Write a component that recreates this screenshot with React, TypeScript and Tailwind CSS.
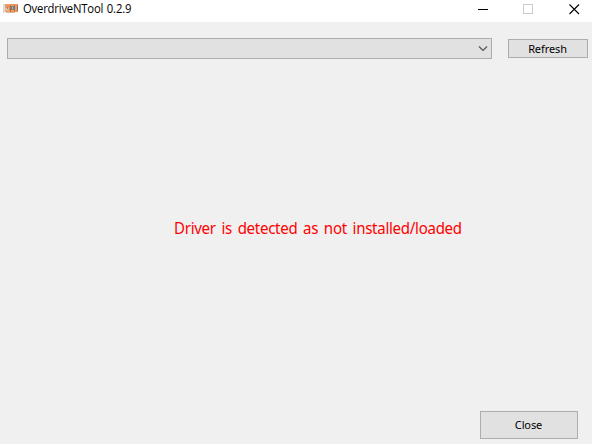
import React from 'react';

function AppIcon() {
  return (
    <svg width="16" height="12" viewBox="0 0 16 12">
      <path fill="#dcd8d3" d="M0 1h2v9H0z" />
      <path fill="#f0a470" d="M2 1h13v8H2z" />
      <path fill="#e8905a" d="M3 2h4v3H3zM8 1h7v1H8zM8 8h7v1H8z" />
      <path fill="#f5bb88" d="M2 5h4v2H2z" />
      <path fill="#a38d78" d="M4 4h1v2H4zM6 5h1v2H6z" />
      <path fill="#d9562c" d="M7 2h1v7H7zM11 2h1v6h-1zM14 2h1v6h-1z" />
      <path fill="#5f8a94" d="M8 3h3v4H8z" />
      <path fill="#9db5a8" d="M9 4h1v2H9zM12 3h2v4h-2z" />
      <path fill="#d9b695" d="M3 9h9v1H3z" />
    </svg>
  );
}

function TitleBar() {
  return (
    <header className="flex h-[22px] items-start bg-white">
      <div className="pt-[3px] pl-[3px]">
        <AppIcon />
      </div>
      <h1 className="ml-[4px] w-[120px] origin-left scale-x-94 whitespace-nowrap pt-px font-['Open_Sans','Noto_Sans',sans-serif] text-[12px] leading-[16px] tracking-[-0.2px] text-black [word-spacing:1px]">
        OverdriveNTool 0.2.9
      </h1>
      <div className="ml-auto flex pr-[12px]">
        <svg width="11" height="20" shapeRendering="crispEdges" className="mr-[34px]">
          <path d="M0 9h10v1H0z" />
        </svg>
        <svg width="10" height="20" shapeRendering="crispEdges" className="mr-[36px]">
          <path d="M.5 4.5h9v9h-9z" fill="none" stroke="#cccccc" />
        </svg>
        <svg width="11" height="20">
          <path d="M.5 4.500l9.500 9.500M10 4.500l-9.500 9.500" fill="none" stroke="#000" strokeWidth="1.1" />
        </svg>
      </div>
    </header>
  );
}

export default function App() {
  return (
    <div className="flex h-[444px] w-[592px] flex-col overflow-hidden bg-[#f0f0f0] font-['Noto_Sans','Open_Sans',sans-serif]">
      <TitleBar />
      <div className="flex items-center justify-between pt-[16px] pr-[4px] pl-[7px]">
        <button aria-label="Adapter" className="flex h-[21px] w-[485px] items-center justify-end border border-[#adadad] bg-[#e1e1e1] pr-[3px]">
          <svg width="10" height="7" viewBox="0 0 10 7">
            <path d="M1 1.500l4 4 4-4" fill="none" stroke="#555" strokeWidth="1.2" />
          </svg>
        </button>
        <button className="h-[19px] w-[80px] border border-[#adadad] bg-[#e1e1e1] pr-px text-[11px] leading-[17px] tracking-[-0.1px] text-black">
          Refresh
        </button>
      </div>
      <main className="flex flex-1 items-start pt-[157px] pl-[173.500px]">
        <p className="origin-left scale-x-94 whitespace-nowrap text-[16px] leading-[24px] tracking-[-0.3px] text-[#ff0000] [word-spacing:2.200px]">
          Driver is detected as not installed/loaded
        </p>
      </main>
      <footer className="flex justify-end pr-[14px] pb-[5px]">
        <button className="h-[28px] w-[98px] border border-[#adadad] bg-[#e1e1e1] pr-px text-[11px] leading-[26px] tracking-[-0.1px] text-black">
          Close
        </button>
      </footer>
    </div>
  );
}
